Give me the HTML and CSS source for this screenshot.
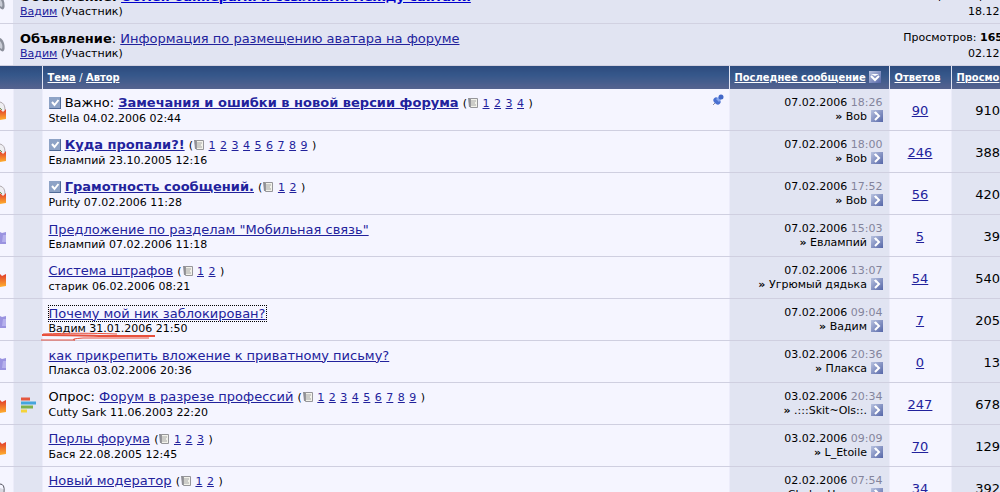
FILE: index.html
```html
<!DOCTYPE html>
<html lang="ru">
<head>
    <meta charset="UTF-8">
    <meta name="viewport" content="width=device-width, initial-scale=1.0">
    <title>Форум</title>
    <link rel="stylesheet" href="styles.css">
</head>
<body>
    <!-- Shared icons -->
    <svg class="sprite" aria-hidden="true">
        <defs>
            <linearGradient id="hot" x1="0" y1="0" x2="0" y2="1">
                <stop offset="0" stop-color="#e03a2c"/>
                <stop offset="1" stop-color="#ffb02e"/>
            </linearGradient>
            <linearGradient id="steel" x1="0" y1="0" x2="1" y2="1">
                <stop offset="0" stop-color="#b9c3e0"/>
                <stop offset="1" stop-color="#5566a8"/>
            </linearGradient>
        </defs>
        <symbol id="i-horn" viewBox="0 0 12 20">
            <path d="M0 3C3 4 5 9 4.500 14C4 17 2 17 0 15Z" fill="#8b8f9b"/>
            <path d="M0 6C2 8 3 11 2 14L0 13Z" fill="#c9ccd6"/>
        </symbol>
        <symbol id="i-hot" viewBox="0 0 12 20">
            <path d="M0 5L2 7L6 5V17L0 18Z" fill="url(#hot)"/>
        </symbol>
        <symbol id="i-lock" viewBox="0 0 12 20">
            <path d="M0 8L3 10L6 8V18L0 19Z" fill="url(#hot)"/>
            <path d="M0 1Q5 2 5 9L3 11L0 8Z" fill="#eeeef2"/>
            <path d="M0 1Q5 2 5 9" fill="none" stroke="#b0a9ae"/>
            <path d="M0 7L2 9" stroke="#6f9a5a"/>
        </symbol>
        <symbol id="i-cold" viewBox="0 0 12 20">
            <path d="M0 5L2 6L6 5V17H0Z" fill="#9a93e0"/>
            <path d="M3 8H6V15H2Z" fill="#b5b0ec"/>
        </symbol>
        <symbol id="i-closed" viewBox="0 0 12 20">
            <path d="M0 5Q5 5 4 13L6 18" fill="none" stroke="#555560"/>
            <path d="M0 9L3 10V18H0Z" fill="#d8d8e0"/>
        </symbol>
        <symbol id="i-check" viewBox="0 0 12 12">
            <rect width="12" height="12" fill="#8ea3c6"/>
            <path d="M0 12H12V0L11 1V11H1Z" fill="#506b99"/>
            <path d="M3 5L5.500 8L9.500 3" fill="none" stroke="#fff" stroke-width="2"/>
        </symbol>
        <symbol id="i-sort" viewBox="0 0 12 12">
            <rect width="12" height="12" fill="url(#steel)"/>
            <path d="M2 3H10L6 5Z" fill="#fff"/>
            <path d="M2 5L6 9L10 5" fill="none" stroke="#fff" stroke-width="2"/>
        </symbol>
        <symbol id="i-go" viewBox="0 0 12 12">
            <rect width="12" height="12" fill="url(#steel)"/>
            <path d="M3 2H5V5Z" fill="#fff"/>
            <path d="M4 2L8 6L4 10" fill="none" stroke="#fff" stroke-width="2"/>
        </symbol>
        <symbol id="i-pages" viewBox="0 0 12 12">
            <path d="M1 1H4V10H2Z" fill="#8f8f94"/>
            <path d="M3.500 1.500H10.500V10.500H3.500Z" fill="#f2f2ea" stroke="#96969a"/>
            <path d="M5 3V9M6 4H9M6 6H8M6 8H9" stroke="#a6a6a6"/>
        </symbol>
        <symbol id="i-pin" viewBox="0 0 12 12">
            <path d="M1 11L4 8" stroke="#8c8ca0"/>
            <ellipse cx="5" cy="7" rx="4" ry="3" transform="rotate(45 5 7)" fill="#4a70d0"/>
            <path d="M4 5L8 2L10 4L7 8Z" fill="#86a6ee"/>
            <circle cx="9" cy="3" r="2.500" fill="#4268c8"/>
        </symbol>
        <symbol id="i-poll" viewBox="0 0 18 18">
            <path d="M2 3H11" stroke="#e4573f" stroke-width="3"/>
            <path d="M2 7H17" stroke="#45a5dd" stroke-width="3"/>
            <path d="M2 11H14" stroke="#7fb04a" stroke-width="3"/>
            <path d="M2 15H8" stroke="#f4d33a" stroke-width="3"/>
        </symbol>
    </svg>

    <!-- Announcements -->
    <div class="notices">
        <div class="notice">
            <span class="status"><svg><use href="#i-horn"/></svg></span>
            <div class="notice-main">
                <div class="title"><b>Объявление:</b> <a class="fresh" href="#">Обмен баннерами и ссылками между сайтами</a></div>
                <div class="author"><a href="#">Вадим</a> (Участник)</div>
            </div>
            <div class="notice-info">
                <div>Просмотров:</div>
                <div>18.12.</div>
            </div>
        </div>
        <div class="notice">
            <span class="status"><svg><use href="#i-horn"/></svg></span>
            <div class="notice-main">
                <div class="title"><b>Объявление</b>: <a href="#">Информация по размещению аватара на форуме</a></div>
                <div class="author"><a href="#">Вадим</a> (Участник)</div>
            </div>
            <div class="notice-info">
                <div>Просмотров: <b>165</b></div>
                <div>02.12.</div>
            </div>
        </div>
    </div>

    <!-- Topics -->
    <table class="topics">
        <colgroup>
            <col class="c-status">
            <col class="c-icon">
            <col>
            <col class="c-last">
            <col class="c-replies">
            <col class="c-views">
        </colgroup>
        <thead>
            <tr>
                <th colspan="2"></th>
                <th><a href="#">Тема</a> <span>/</span> <a href="#">Автор</a></th>
                <th><a href="#">Последнее сообщение</a> <svg class="ico"><use href="#i-sort"/></svg></th>
                <th><a href="#">Ответов</a></th>
                <th><a href="#">Просмо</a></th>
            </tr>
        </thead>
        <tbody>
            <tr>
                <td class="status"><svg><use href="#i-lock"/></svg></td>
                <td class="alt"></td>
                <td class="topic">
                    <svg class="pin"><use href="#i-pin"/></svg>
                    <div class="title"><svg class="ico"><use href="#i-check"/></svg> Важно: <a class="strong" href="#">Замечания и ошибки в новой версии форума</a> <span class="pages">(<svg class="ico"><use href="#i-pages"/></svg> <a href="#">1</a> <a href="#">2</a> <a href="#">3</a> <a href="#">4</a> )</span></div>
                    <div class="author">Stella 04.02.2006 02:44</div>
                </td>
                <td class="last alt">
                    <div>07.02.2006 <span class="time">18:26</span></div>
                    <div><b>»</b> Bob <svg class="ico"><use href="#i-go"/></svg></div>
                </td>
                <td class="replies"><a href="#">90</a></td>
                <td class="views alt">910</td>
            </tr>
            <tr>
                <td class="status"><svg><use href="#i-lock"/></svg></td>
                <td class="alt"></td>
                <td class="topic">
                    <div class="title"><svg class="ico"><use href="#i-check"/></svg> <a class="strong" href="#">Куда пропали?!</a> <span class="pages">(<svg class="ico"><use href="#i-pages"/></svg> <a href="#">1</a> <a href="#">2</a> <a href="#">3</a> <a href="#">4</a> <a href="#">5</a> <a href="#">6</a> <a href="#">7</a> <a href="#">8</a> <a href="#">9</a> )</span></div>
                    <div class="author">Евлампий 23.10.2005 12:16</div>
                </td>
                <td class="last alt">
                    <div>07.02.2006 <span class="time">18:00</span></div>
                    <div><b>»</b> Bob <svg class="ico"><use href="#i-go"/></svg></div>
                </td>
                <td class="replies"><a href="#">246</a></td>
                <td class="views alt">388</td>
            </tr>
            <tr>
                <td class="status"><svg><use href="#i-lock"/></svg></td>
                <td class="alt"></td>
                <td class="topic">
                    <div class="title"><svg class="ico"><use href="#i-check"/></svg> <a class="strong" href="#">Грамотность сообщений.</a> <span class="pages">(<svg class="ico"><use href="#i-pages"/></svg> <a href="#">1</a> <a href="#">2</a> )</span></div>
                    <div class="author">Purity 07.02.2006 11:28</div>
                </td>
                <td class="last alt">
                    <div>07.02.2006 <span class="time">17:52</span></div>
                    <div><b>»</b> Bob <svg class="ico"><use href="#i-go"/></svg></div>
                </td>
                <td class="replies"><a href="#">56</a></td>
                <td class="views alt">420</td>
            </tr>
            <tr>
                <td class="status"><svg><use href="#i-cold"/></svg></td>
                <td class="alt"></td>
                <td class="topic">
                    <div class="title"><a href="#">Предложение по разделам "Мобильная связь"</a></div>
                    <div class="author">Евлампий 07.02.2006 11:18</div>
                </td>
                <td class="last alt">
                    <div>07.02.2006 <span class="time">15:03</span></div>
                    <div><b>»</b> Евлампий <svg class="ico"><use href="#i-go"/></svg></div>
                </td>
                <td class="replies"><a href="#">5</a></td>
                <td class="views alt">39</td>
            </tr>
            <tr>
                <td class="status"><svg><use href="#i-hot"/></svg></td>
                <td class="alt"></td>
                <td class="topic">
                    <div class="title"><a href="#">Система штрафов</a> <span class="pages">(<svg class="ico"><use href="#i-pages"/></svg> <a href="#">1</a> <a href="#">2</a> )</span></div>
                    <div class="author">старик 06.02.2006 08:21</div>
                </td>
                <td class="last alt">
                    <div>07.02.2006 <span class="time">13:07</span></div>
                    <div><b>»</b> Угрюмый дядька <svg class="ico"><use href="#i-go"/></svg></div>
                </td>
                <td class="replies"><a href="#">54</a></td>
                <td class="views alt">540</td>
            </tr>
            <tr>
                <td class="status"><svg><use href="#i-cold"/></svg></td>
                <td class="alt"></td>
                <td class="topic">
                    <div class="title"><a class="focused" href="#">Почему мой ник заблокирован?</a></div>
                    <div class="author">Вадим 31.01.2006 21:50</div>
                    <svg class="mark" viewBox="0 0 120 10"><path d="M4 2C30 1 50 1 78 2M2 8H36Q30 7 44 6H110" fill="none" stroke="#e8503c"/><path d="M3 3Q40 3 60 4H116" fill="none" stroke="#e8503c" stroke-width="2"/></svg>
                </td>
                <td class="last alt">
                    <div>07.02.2006 <span class="time">09:04</span></div>
                    <div><b>»</b> Вадим <svg class="ico"><use href="#i-go"/></svg></div>
                </td>
                <td class="replies"><a href="#">7</a></td>
                <td class="views alt">205</td>
            </tr>
            <tr>
                <td class="status"><svg><use href="#i-cold"/></svg></td>
                <td class="alt"></td>
                <td class="topic">
                    <div class="title"><a href="#">как прикрепить вложение к приватному письму?</a></div>
                    <div class="author">Плакса 03.02.2006 20:36</div>
                </td>
                <td class="last alt">
                    <div>03.02.2006 <span class="time">20:36</span></div>
                    <div><b>»</b> Плакса <svg class="ico"><use href="#i-go"/></svg></div>
                </td>
                <td class="replies"><a href="#">0</a></td>
                <td class="views alt">13</td>
            </tr>
            <tr>
                <td class="status"><svg><use href="#i-hot"/></svg></td>
                <td class="alt poll"><svg><use href="#i-poll"/></svg></td>
                <td class="topic">
                    <div class="title">Опрос: <a href="#">Форум в разрезе профессий</a> <span class="pages">(<svg class="ico"><use href="#i-pages"/></svg> <a href="#">1</a> <a href="#">2</a> <a href="#">3</a> <a href="#">4</a> <a href="#">5</a> <a href="#">6</a> <a href="#">7</a> <a href="#">8</a> <a href="#">9</a> )</span></div>
                    <div class="author">Cutty Sark 11.06.2003 22:20</div>
                </td>
                <td class="last alt">
                    <div>03.02.2006 <span class="time">20:34</span></div>
                    <div><b>»</b> .:::Skit~Ols::. <svg class="ico"><use href="#i-go"/></svg></div>
                </td>
                <td class="replies"><a href="#">247</a></td>
                <td class="views alt">678</td>
            </tr>
            <tr>
                <td class="status"><svg><use href="#i-hot"/></svg></td>
                <td class="alt"></td>
                <td class="topic">
                    <div class="title"><a href="#">Перлы форума</a> <span class="pages">(<svg class="ico"><use href="#i-pages"/></svg> <a href="#">1</a> <a href="#">2</a> <a href="#">3</a> )</span></div>
                    <div class="author">Бася 22.08.2005 12:45</div>
                </td>
                <td class="last alt">
                    <div>03.02.2006 <span class="time">09:09</span></div>
                    <div><b>»</b> L_Etoile <svg class="ico"><use href="#i-go"/></svg></div>
                </td>
                <td class="replies"><a href="#">70</a></td>
                <td class="views alt">129</td>
            </tr>
            <tr>
                <td class="status"><svg><use href="#i-closed"/></svg></td>
                <td class="alt"></td>
                <td class="topic">
                    <div class="title"><a href="#">Новый модератор</a> <span class="pages">(<svg class="ico"><use href="#i-pages"/></svg> <a href="#">1</a> <a href="#">2</a> )</span></div>
                    <div class="author">&nbsp;</div>
                </td>
                <td class="last alt">
                    <div>02.02.2006 <span class="time">07:54</span></div>
                    <div><b>»</b> Choko_Human <svg class="ico"><use href="#i-go"/></svg></div>
                </td>
                <td class="replies"><a href="#">34</a></td>
                <td class="views alt">392</td>
            </tr>
        </tbody>
    </table>
</body>
</html>
```

FILE: styles.css
```css
body {
    margin: 0;
    height: 100vh;
    overflow: hidden;
    background: #f5f5ff;
    color: #000;
    font-family: Verdana, "DejaVu Sans", sans-serif;
    font-size: 11px;
    line-height: 14px;
}

a {
    color: #22229c;
}

.sprite {
    position: absolute;
    width: 0;
    height: 0;
}

.ico {
    width: 12px;
    height: 12px;
    vertical-align: -2px;
}

.title {
    font-size: 13px;
    line-height: 16px;
    white-space: nowrap;
}

/* announcements: the first one is scrolled half out of view */
.notices {
    margin-top: -18px;
}

.notice {
    display: flex;
    align-items: center;
    box-sizing: border-box;
    height: 42px;
    background: #e1e4f2;
    border-bottom: 1px solid #d1d1e1;
}

.notice .status {
    align-self: stretch;
    display: flex;
    align-items: center;
    width: 13px;
    margin-right: 7px;
    background: #f5f5ff;
}

.notice-main {
    flex: 1;
    padding-top: 2px;
}

.notice-info {
    margin-right: -3px;
    padding-top: 2px;
    text-align: right;
    line-height: 16px;
    white-space: nowrap;
}

.fresh {
    color: #0000cc;
    font-weight: bold;
}

.status svg {
    display: block;
    width: 12px;
    height: 20px;
}

.topics {
    width: 100%;
    table-layout: fixed;
    border-collapse: collapse;
}

.c-status {
    width: 13px;
}

.c-icon {
    width: 29px;
}

.c-last {
    width: 160px;
}

.c-replies {
    width: 62px;
}

.c-views {
    width: 49px;
}

th {
    height: 22px;
    padding: 1px 0 0 5px;
    border-left: 1px solid #e1e4f2;
    background: linear-gradient(#2d4b7e, #35578a 40%, #56638f);
    color: #fff;
    font-family: Tahoma, "DejaVu Sans Condensed", "DejaVu Sans", sans-serif;
    text-align: left;
    white-space: nowrap;
}

th:first-child {
    border-left: 0;
}

th a {
    color: #fff;
}

th span {
    font-weight: normal;
}

td {
    height: 39px;
    padding: 2px 0 0;
    border-bottom: 1px solid #cfcfe0;
    border-left: 1px solid #ececfa;
    background: #f5f5ff;
}

td:first-child {
    border-left: 0;
}

.alt {
    background: #e1e4f2;
}

.poll svg {
    display: block;
    width: 18px;
    height: 18px;
    margin-left: 5px;
}

.topic {
    position: relative;
    padding: 2px 6px 0;
}

.strong {
    font-weight: bold;
}

.pages {
    font-size: 11px;
}

.pages a {
    margin-right: 1px;
}

.pin {
    position: absolute;
    top: 5px;
    right: 5px;
    width: 12px;
    height: 12px;
}

.focused {
    outline: 1px dotted #000;
}

.mark {
    position: absolute;
    left: -4px;
    bottom: -2px;
    width: 120px;
    height: 10px;
}

.last {
    padding: 0 6px;
    text-align: right;
    white-space: nowrap;
}

.time {
    color: #84849c;
}

.replies {
    text-align: center;
    font-size: 13px;
}

.views {
    text-align: right;
    font-size: 13px;
}
```
